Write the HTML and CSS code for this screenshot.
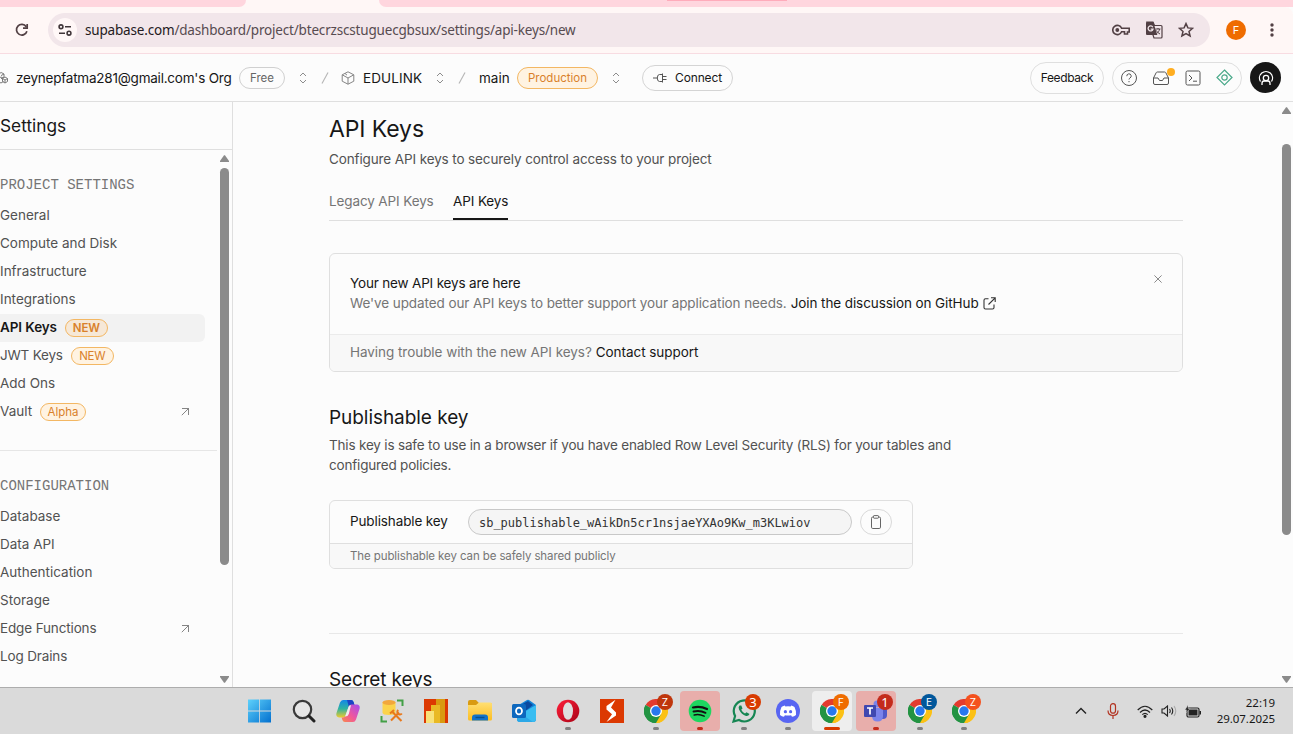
FILE: index.html
```html
<!DOCTYPE html>
<html lang="en">
<head>
<meta charset="utf-8">
<title>API Keys | Supabase</title>
<link rel="stylesheet" href="styles.css">
</head>
<body>
<svg class="defs" width="0" height="0">
  <defs>
    <linearGradient id="win" x1="0" y1="0" x2="1" y2="1"><stop offset="0" stop-color="#5ed1fb"/><stop offset="1" stop-color="#0370cf"/></linearGradient>
    <linearGradient id="copA" x1="0" y1="0" x2="0" y2="1"><stop offset="0" stop-color="#1387e8"/><stop offset=".5" stop-color="#2fb3a0"/><stop offset="1" stop-color="#efcb2d"/></linearGradient>
    <linearGradient id="copB" x1="1" y1="0" x2="0" y2="1"><stop offset="0" stop-color="#a34df0"/><stop offset=".55" stop-color="#f0569c"/><stop offset="1" stop-color="#f88b48"/></linearGradient>
    <linearGradient id="opera" x1="0" y1="0" x2="1" y2="1"><stop offset="0" stop-color="#ff1f3a"/><stop offset="1" stop-color="#a80316"/></linearGradient>
    <linearGradient id="folder" x1="0" y1="0" x2="0" y2="1"><stop offset="0" stop-color="#ffdf73"/><stop offset="1" stop-color="#fbbd22"/></linearGradient>
  </defs>
  <symbol id="updown" viewBox="0 0 8 12"><path d="M1 4l3-3 3 3M1 8l3 3 3-3" fill="none" stroke="#8c8c8c"/></symbol>
  <symbol id="slash" viewBox="0 0 8 12"><path d="M1 11.5L7 .5" fill="none" stroke="#b5b5b5" stroke-width="1.1"/></symbol>
  <symbol id="arrow" viewBox="0 0 9 9"><path d="M.8 8.2L8 1M1 1.500H7.500v6.500" fill="none" stroke="#858585"/></symbol>
  <symbol id="chrome" viewBox="0 0 24 24">
    <path d="M12 12L1.6 6A12 12 0 0 1 22.4 6z" fill="#e33b2e"/>
    <path d="M12 12L22.4 6A12 12 0 0 1 12 24z" fill="#fbc116"/>
    <path d="M12 12L12 24A12 12 0 0 1 1.6 6z" fill="#229342"/>
    <path d="M12 6h10.4A12 12 0 0 0 12 0z" fill="#e33b2e"/>
    <path d="M17.2 15L12 24a12 12 0 0 0 6-1.6L22.4 6H12z" fill="#fbc116"/>
    <path d="M1.6 6l5.2 9 5.2 3 5.2-3L12 24A12 12 0 0 1 1.6 6z" fill="#229342"/>
    <circle cx="12" cy="12" r="6" fill="#fff"/><circle cx="12" cy="12" r="4.7" fill="#2878ee"/>
  </symbol>
</svg>
<div class="screen">
  <div class="tabstrip"><div class="strip-left"></div><div class="strip-tab"></div><div class="strip-right"><i></i></div></div>
  <div class="toolbar">
    <svg class="reload" width="14" height="14" viewBox="0 0 14 14"><path d="M11.9 8.2A5.3 5.3 0 1 1 11.2 3.8M12.2 1v4.2H8" fill="none" stroke="#524044" stroke-width="1.7"/></svg>
    <div class="omnibox">
      <span class="site"><svg width="14" height="12" viewBox="0 0 14 12" fill="none" stroke="#40363a" stroke-width="1.6"><circle cx="3" cy="2.8" r="1.9"/><path d="M7 2.8h6M1 9.2h6"/><circle cx="11" cy="9.2" r="1.9"/></svg></span>
      <span class="url"><b>supabase.com</b>/dashboard/project/btecrzscstuguecgbsux/settings/api-keys/new</span>
      <span class="omni-icons">
        <svg width="18" height="12" viewBox="0 0 18 12" fill="none" stroke="#524044" stroke-width="1.6"><path d="M9.6 4.2H17.2V8H15.5V10H12.5V7.8H9.6A4.6 4.6 0 1 1 9.6 4.2z"/><circle cx="5.3" cy="6" r="1.9" fill="#524044" stroke="none"/></svg>
        <svg width="18" height="18" viewBox="0 0 18 18"><path d="M2 1h6l1.5 3.5H16a1 1 0 0 1 1 1V16a1 1 0 0 1-1 1H9l-1-3z" fill="none" stroke="#524044" stroke-width="1.2"/><path d="M2 1h6.3l4 13H2a1 1 0 0 1-1-1V2a1 1 0 0 1 1-1z" fill="#524044"/><path d="M7.8 6.2A2.5 2.5 0 1 0 8 8.2H5.7" fill="none" stroke="#f2e6ea" stroke-width="1.3"/><path d="M10.5 8h5M13 7v1M14.6 8c-.4 2-1.4 3.4-3 4.5M11.5 9.500c.6 1.500 1.800 2.500 3.500 3.500" fill="none" stroke="#524044"/></svg>
        <svg width="16" height="16" viewBox="0 0 16 16"><path d="M8 1.600l1.900 4.300 4.700.4-3.600 3.100 1.100 4.600L8 11.600 3.900 14 5 9.400 1.400 6.300l4.700-.4z" fill="none" stroke="#524044" stroke-width="1.500"/></svg>
      </span>
    </div>
    <span class="profile">F</span>
    <svg class="dots" width="4" height="14" viewBox="0 0 4 14" fill="#524044"><circle cx="2" cy="2" r="1.700"/><circle cx="2" cy="7" r="1.700"/><circle cx="2" cy="12" r="1.700"/></svg>
  </div>
  <header class="header">
    <svg class="org-ico" width="10" height="14" viewBox="0 0 10 14" fill="none" stroke="#7a7a7a"><path d="M0 2.200L1.200 1.500 4 3v3.200L1 7.800M1 4.600L4 3M5 6l2.500 1.500v3L5 12l-2.500-1.500v-3zM2.500 7.500L5 9l2.500-1.500M5 9v3M3 7L1 6 0 6.500M0 11.500l1 .5 2.500-1.500"/></svg>
    <span class="org">zeynepfatma281@gmail.com's Org</span>
    <span class="pill free">Free</span>
    <svg class="ud1" width="8" height="12"><use href="#updown"/></svg>
    <svg class="sl1" width="8" height="12"><use href="#slash"/></svg>
    <svg class="cube" width="14" height="14" viewBox="0 0 14 14" fill="none" stroke="#858585"><path d="M7 .8l5.800 3v6.400L7 13.200l-5.800-3V3.800zM1.200 3.800L7 7l5.800-3.200M7 7v6.200M4 2.500l2 1.600"/></svg>
    <span class="project">EDULINK</span>
    <svg class="ud2" width="8" height="12"><use href="#updown"/></svg>
    <svg class="sl2" width="8" height="12"><use href="#slash"/></svg>
    <span class="branch">main</span>
    <span class="pill prod">Production</span>
    <svg class="ud3" width="8" height="12"><use href="#updown"/></svg>
    <span class="connect"><svg width="14" height="10" viewBox="0 0 14 10" fill="none" stroke="#555"><path d="M0 5h4M9.500 1.500H6.500Q4.300 1.500 4.300 5T6.500 8.500H9.500M9.500.5v9M9.500 3.500H13.500M9.500 6.500H13.500"/></svg><span>Connect</span></span>
    <div class="header-right">
      <span class="feedback">Feedback</span>
      <span class="tools">
        <svg width="18" height="18" viewBox="0 0 18 18" fill="none" stroke="#555"><circle cx="9" cy="9" r="7.500"/><path d="M6.800 7.200A2.200 2.200 0 1 1 10 9q-1 .6-1 1.500M9 12v1.200"/></svg>
        <span class="inbox"><svg width="18" height="16" viewBox="0 0 18 16" fill="none" stroke="#555"><path d="M1.500 8L4.200 2.700Q4.600 2 5.300 2h7.400q.7 0 1.100.7L16.500 8v5q0 1.500-1.500 1.500H3Q1.500 14.500 1.500 13zM1.500 8H6l1.500 2.500h3L12 8h4.500"/></svg><i></i></span>
        <svg width="16" height="16" viewBox="0 0 16 16" fill="none" stroke="#555"><rect x="1" y="1" width="14" height="14" rx="1.500"/><path d="M4 5l3 3-3 3M8 11.200h4"/></svg>
        <svg width="17" height="17" viewBox="0 0 17 17" fill="none" stroke="#4aa98a" stroke-width="1.200"><path d="M8.500 1L16 8.500 8.500 16 1 8.500z"/><circle cx="8.500" cy="8.500" r="2.700"/></svg>
      </span>
      <span class="avatar"><svg width="16" height="18" viewBox="0 0 16 18" fill="none" stroke="#fff" stroke-width="1.300"><path d="M2.500 12.500A6.500 6.500 0 1 1 13.500 12.500M4 16v-1.500q0-2.500 2-2.500h4q2 0 2 2.500V16"/><circle cx="8" cy="9" r="2.700"/></svg></span>
    </div>
  </header>
  <div class="body">
    <aside class="sidebar">
      <div class="side-title">Settings</div>
      <div class="side-scroll">
        <nav class="nav">
          <div class="group">PROJECT SETTINGS</div>
          <a>General</a><a>Compute and Disk</a><a>Infrastructure</a><a>Integrations</a>
          <a class="active">API Keys<em>NEW</em></a><a class="jwt">JWT Keys<em>NEW</em></a><a>Add Ons</a>
          <a>Vault<em class="alpha">Alpha</em><svg width="9" height="9"><use href="#arrow"/></svg></a>
          <hr>
          <div class="group">CONFIGURATION</div>
          <a>Database</a><a>Data API</a><a>Authentication</a><a>Storage</a>
          <a class="edge">Edge Functions<svg width="9" height="9"><use href="#arrow"/></svg></a><a class="edge">Log Drains</a>
        </nav>
        <div class="bar side-bar">
          <svg width="9" height="7" viewBox="0 0 9 7"><path d="M4 .3h1L9 6v1H0V6z" fill="#8b8b8b"/></svg>
          <i></i>
          <svg width="9" height="7" viewBox="0 0 9 7"><path d="M0 0h9v1L5 6.700H4L0 1z" fill="#8b8b8b"/></svg>
        </div>
      </div>
    </aside>
    <main class="main">
      <div class="content">
        <h1>API Keys</h1>
        <p class="sub">Configure API keys to securely control access to your project</p>
        <div class="tabs"><span class="legacy">Legacy API Keys</span><span class="on">API Keys</span></div>
        <section class="alert">
          <div class="alert-top">
            <div><div class="strong">Your new API keys are here</div>
            <div class="alert-text"><span>We've updated our API keys to better support your application needs.</span><span class="link">Join the discussion on GitHub</span><svg width="13" height="13" viewBox="0 0 13 13" fill="none" stroke="#333" stroke-width="1.100"><path d="M5.500 1.800H2.500Q1 1.800 1 3.300V10.500Q1 12 2.500 12H9.500Q11 12 11 10.500V7.500M8 .8H12.200V5M12.200.8L5.500 7.500"/></svg></div></div>
            <svg class="close" width="8" height="8" viewBox="0 0 8 8"><path d="M.4.4l7.200 7.200M7.600.4L.4 7.600" stroke="#8a8a8a"/></svg>
          </div>
          <div class="alert-foot"><span>Having trouble with the new API keys?</span><span class="link">Contact support</span></div>
        </section>
        <h2>Publishable key</h2>
        <p class="desc"><span>This key is safe to use in a browser if you have enabled Row Level Security (RLS) for your tables and</span><br>configured policies.</p>
        <section class="card">
          <div class="key-row"><span class="key-label">Publishable key</span><span class="key">sb_publishable_wAikDn5cr1nsjaeYXAo9Kw_m3KLwiov</span><span class="copy"><svg width="12" height="14" viewBox="0 0 12 14" fill="none" stroke="#666"><rect x="1.500" y="2" width="9" height="11.500" rx="1.300"/><rect x="3.500" y=".6" width="5" height="2.600" rx=".6" fill="#fcfcfc"/></svg></span></div>
          <div class="card-foot">The publishable key can be safely shared publicly</div>
        </section>
        <hr>
        <h2 class="secret">Secret keys</h2>
      </div>
      <div class="bar main-bar">
        <svg width="9" height="7" viewBox="0 0 9 7"><path d="M4 .3h1L9 6v1H0V6z" fill="#8b8b8b"/></svg>
        <i></i>
        <svg width="9" height="7" viewBox="0 0 9 7"><path d="M0 0h9v1L5 6.700H4L0 1z" fill="#8b8b8b"/></svg>
      </div>
    </main>
  </div>
  <footer class="taskbar">
    <div class="apps">
      <span class="app"><svg width="24" height="24" viewBox="0 0 24 24"><path d="M0 .5h11.200v11H0zM12 .5h11v11H12zM0 12.500h11.200v11H0zM12 12.500h11v11H12z" fill="url(#win)"/></svg></span>
      <span class="app"><svg width="24" height="24" viewBox="0 0 24 24" fill="none"><circle cx="10.500" cy="10.500" r="8.700" stroke="#3a3a3a" stroke-width="2.200" fill="#e6e6e6"/><path d="M17 17l5 5" stroke="#222" stroke-width="3" stroke-linecap="round"/></svg></span>
      <span class="app"><svg width="24" height="24" viewBox="0 0 24 24"><path d="M7 1h8q2 0 2.600 2l1 3.500H15q-2 0-2.700 2L9.500 17q-.7 1.500-2.500 1.500H3Q-.5 18 .5 14L4 3.500Q5 1 7 1z" fill="url(#copA)"/><path d="M11 1h4q2 0 2.600 2l1 3.500H15q-1.500 0-2.200 1z" fill="#1d43c5"/><path d="M17 23H9q-2 0-2.600-2l-.8-2.500H7q2 0 2.800-2L13 7q.6-1.500 2.500-1.500H21q3.500.5 2.500 4.500L20 20.500Q19 23 17 23z" fill="url(#copB)"/><path d="M9.800 15.500L12.700 7.500Q13.400 6 15 6.200L12.800 15q-.8 2.500-3.800 2.500z" fill="#eee"/></svg></span>
      <span class="app"><svg width="24" height="24" viewBox="0 0 24 24"><path d="M17 1.500h5.500V7M1.500 17v5.500H7" fill="none" stroke="#43a047" stroke-width="2"/><path d="M2.500 3.500v10q0 2.500 6.500 2.500t6.500-2.500v-10z" fill="#fcd34b"/><ellipse cx="9" cy="3.500" rx="6.500" ry="2.500" fill="#f2a73c"/><path d="M11 21.500l8-8M12.500 13l9 9" stroke="#e8791d" stroke-width="2.100"/><path d="M10 14.500l4-3.500M18.300 11a2.500 2.500 0 1 0 3.500 3.500" stroke="#e8791d" stroke-width="2" fill="none"/></svg></span>
      <span class="app"><svg width="24" height="24" viewBox="0 0 24 24"><path d="M0 0h24v24H0z" fill="#dc3902"/><path d="M12 0h9v24h-9z" fill="#d99a10"/><path d="M7 6h9v18H7z" fill="#e9b924"/><path d="M2 12h8v12H2z" fill="#f8e27a"/></svg></span>
      <span class="app"><svg width="24" height="24" viewBox="0 0 24 24"><path d="M0 3q0-2 2-2h6l3 3h11q2 0 2 2v6H0z" fill="#d99b12"/><path d="M0 6h8l3-2.500h11.500Q24 3.500 24 5v15q0 1.500-1.500 1.500h-21Q0 21.500 0 20z" fill="url(#folder)"/><path d="M4 21.500V18.500q0-3 3-3h10q3 0 3 3v3z" fill="#1173c9"/><path d="M7.500 18.500h9" stroke="#07508f" stroke-width="1.400"/></svg></span>
      <span class="app"><svg width="24" height="24" viewBox="0 0 24 24"><path d="M5 7l10-6q1-.5 2 0l7 5v14q0 3-3 3H8q-3 0-3-3z" fill="#1283d8"/><path d="M7 7l9-5 5 4-9 7z" fill="#0a4aa0"/><path d="M12 13L24 6v14q0 3-3 3H8q-2 0-3-2z" fill="#39bdf1"/><path d="M5 12l16 11H8q-3 0-3-3z" fill="#2ca8e7"/><rect y="5" width="14" height="14" rx="1.500" fill="#0d68be"/><ellipse cx="7" cy="12" rx="3" ry="3.400" fill="none" stroke="#fff" stroke-width="1.800"/></svg></span>
      <span class="app"><svg width="24" height="24" viewBox="0 0 24 24"><circle cx="12" cy="12" r="11.300" fill="url(#opera)"/><ellipse cx="12" cy="12" rx="5" ry="8.800" fill="#dedede"/></svg><b></b></span>
      <span class="app"><svg width="24" height="24" viewBox="0 0 24 24"><path d="M0 0h24v24H0z" fill="#dc3902"/><path d="M15.500 .8L6.500 7v3.500l5.500 4.800L6.500 23 16 16.500v-3L11 8.500z" fill="#fff"/></svg></span>
      <span class="app"><svg width="24" height="24"><use href="#chrome"/></svg><em class="brick">Z</em><b></b></span>
      <span class="app pink"><svg width="24" height="24" viewBox="0 0 24 24" fill="none" stroke="#111" stroke-linecap="round"><circle cx="12" cy="12" r="11.300" fill="#1ed760" stroke="none"/><path d="M5 8.500q7-2 14 1.500" stroke-width="2.200"/><path d="M5.500 12.500q6.500-1.500 12 1.300" stroke-width="1.900"/><path d="M6.200 16q5-1.300 10 1.200" stroke-width="1.500"/></svg><b></b></span>
      <span class="app"><svg width="24" height="24" viewBox="0 0 24 24" fill="none"><path d="M1.500 22.500l1.600-5.500A10.500 10.500 0 1 1 7 21z" stroke="#168653" stroke-width="2.200"/><path d="M7.500 6.500Q6 8 7 10.500q2.500 5 7 6.500 2.500.5 3.500-2l-3-1.800-1.500 1.300q-2.500-1-3.800-3.700L10.500 9.500 9.300 6.500z" fill="#168653"/></svg><em class="num">3</em><b></b></span>
      <span class="app"><svg width="24" height="24" viewBox="0 0 24 24"><circle cx="12" cy="12" r="12" fill="#5865f2"/><path d="M8.800 6.500Q6.500 7 5.500 8 3.500 12 4 16q1.800 1.500 4 1.700l.9-1.500q3 .8 6.200 0l.9 1.500q2.200-.2 4-1.700.5-4-1.500-8-1-1-3.300-1.500l-.6 1Q12 7 9.400 7.500z" fill="#fff"/><circle cx="9.400" cy="12.700" r="1.600" fill="#5865f2"/><circle cx="14.600" cy="12.700" r="1.600" fill="#5865f2"/></svg><b></b></span>
      <span class="app current"><svg width="24" height="24"><use href="#chrome"/></svg><em class="orange">F</em><b></b></span>
      <span class="app pink"><svg width="24" height="24" viewBox="0 0 24 24"><circle cx="13" cy="5" r="3.500" fill="#7b83eb"/><path d="M16 8h7v8q0 4-4 4h-4z" fill="#5059c9"/><path d="M8 9h11v8q0 5.500-5.500 5.500T8 17z" fill="#7b83eb"/><rect y="6" width="12" height="12" rx="1" fill="#4048b0"/><path d="M3 9h6M6 9v6.500" stroke="#fff" stroke-width="1.700"/></svg><em class="num red">1</em><b></b></span>
      <span class="app"><svg width="24" height="24"><use href="#chrome"/></svg><em class="blue">E</em><b></b></span>
      <span class="app"><svg width="24" height="24"><use href="#chrome"/></svg><em class="coral">Z</em><b></b></span>
    </div>
    <div class="tray">
      <svg class="chev" width="12" height="8" viewBox="0 0 12 8"><path d="M1 6.500l5-5 5 5" fill="none" stroke="#222" stroke-width="1.400"/></svg>
      <svg class="mic" width="12" height="16" viewBox="0 0 12 16" fill="none" stroke="#b23220" stroke-width="1.200"><rect x="3.500" y=".7" width="5" height="9.500" rx="2.500"/><path d="M1 7.500q0 5 5 5t5-5M6 12.500V16"/></svg>
      <svg class="wifi" width="16" height="13" viewBox="0 0 16 13" fill="none" stroke="#222" stroke-width="1.200"><path d="M.7 5q7.300-7.500 14.600 0M3 7.500q5-5 10 0M5.300 9.700q2.700-2.700 5.400 0"/><circle cx="8" cy="11.300" r="1" fill="#222"/></svg>
      <svg class="vol" width="16" height="12" viewBox="0 0 16 12" fill="none" stroke="#222" stroke-width="1.100"><path d="M1 4h2L6.500 1v10L3 8H1zM8.500 4q1.500 2 0 4M10.500 2.500q2.500 3.500 0 7"/><path d="M13 1q3.500 5 0 10" stroke="#aaa"/></svg>
      <svg class="batt" width="17" height="13" viewBox="0 0 17 13"><rect x="2" y="3" width="12" height="9" rx="1.500" fill="none" stroke="#222" stroke-width="1.200"/><path d="M3.500 4.500h9v6h-9zM14.500 6H16v3.500h-1.500z" fill="#222"/><path d="M3 0L0 5h2L1 8l4-4.500H3z" fill="#222" stroke="#dadada" stroke-width=".4"/></svg>
      <div class="clock"><span>22:19</span><span>29.07.2025</span></div>
    </div>
  </footer>
</div>
</body>
</html>
```
FILE: styles.css
```css
* { box-sizing: border-box; }
body { margin: 0; font-family: Inter, "Liberation Sans", sans-serif; font-size: 13.5px; color: #171717; background: #fcfcfc; }
svg { display: block; flex: none; }
.defs { position: absolute; }
h1, h2, p { margin: 0; font-weight: 400; }
.screen { width: 1293px; height: 734px; display: flex; flex-direction: column; overflow: hidden; }
.screen span { white-space: nowrap; }

.tabstrip { height: 7px; display: flex; background: #fff7f6; flex: none; }
.strip-left { width: 246px; background: #ffd6de; border-bottom-right-radius: 8px; }
.strip-tab { width: 133px; }
.strip-right { flex: 1; background: #ffd6de; border-bottom-left-radius: 8px; padding-left: 288px; }
.strip-right i { display: block; width: 120px; height: 1px; background: #ffacbb; }
.toolbar { height: 47px; flex: none; display: flex; align-items: center; background: #fff7f6; border-bottom: 1px solid #f8dce2; border-top-right-radius: 8px; padding-left: 15px; }
.omnibox { margin-left: 19px; width: 1162px; height: 34px; border-radius: 17px; background: #f2e6ea; display: flex; align-items: center; padding-left: 5px; }
.site { width: 24px; height: 24px; border-radius: 50%; background: #fff7f7; display: flex; align-items: center; justify-content: center; }
.url { margin-left: 8px; font: 13.5px/20px "Noto Sans", sans-serif; letter-spacing: -.18px; color: #574b50; }
.url b { font-weight: 400; color: #241a1d; }
.omni-icons { margin-left: auto; margin-right: 16px; display: flex; align-items: center; gap: 15px; }
.profile { margin-left: 16px; width: 20px; height: 20px; border-radius: 50%; background: #ef6c00; color: #fff; font-size: 11px; line-height: 20px; text-align: center; }
.dots { margin-left: 24px; }

.header { height: 48px; flex: none; display: flex; align-items: center; border-bottom: 1px solid #dfdfdf; }
.org-ico { margin-right: 6px; }
.org { width: 215px; letter-spacing: -.22px; }
.pill { height: 22px; border-radius: 11px; border: 1px solid #d0d0d0; font-size: 11.5px; line-height: 20px; text-align: center; color: #666; }
.free { width: 46px; margin-left: 8px; }
.ud1 { margin-left: 14px; } .sl1 { margin-left: 14px; } .cube { margin-left: 12px; }
.project { margin-left: 8px; width: 60px; letter-spacing: .1px; }
.ud2 { margin-left: 13px; } .sl2 { margin-left: 14px; }
.branch { margin-left: 13px; width: 30px; }
.prod { margin-left: 8px; width: 81px; border-color: #f3b763; background: #fff3e2; color: #d9812b; }
.ud3 { margin-left: 14px; }
.connect { margin-left: 22px; width: 91px; height: 26px; border: 1px solid #d4d4d4; border-radius: 13px; display: flex; align-items: center; padding-left: 10px; gap: 8px; font-size: 12px; letter-spacing: -.14px; }
.header-right { margin-left: auto; padding-right: 12px; display: flex; align-items: center; gap: 8px; }
.feedback { width: 74px; height: 32px; border: 1px solid #dfdfdf; border-radius: 16px; line-height: 30px; text-align: center; font-size: 12px; letter-spacing: -.4px; }
.tools { width: 130px; height: 32px; border: 1px solid #dfdfdf; border-radius: 16px; display: flex; align-items: center; justify-content: space-between; padding: 0 8px 0 7px; }
.inbox { position: relative; left: -1px; }
.inbox i { position: absolute; right: -5px; top: -2px; width: 8px; height: 8px; border-radius: 50%; background: #ffae21; }
.avatar { width: 31px; height: 31px; border-radius: 50%; background: #171717; display: flex; align-items: center; justify-content: center; }

.body { height: 585px; flex: none; display: flex; overflow: hidden; }
.sidebar { width: 233px; border-right: 1px solid #dfdfdf; flex: none; }
.side-title { height: 48px; border-bottom: 1px solid #dfdfdf; font-size: 17.300px; line-height: 48px; }
.side-scroll { display: flex; height: 537px; }
.nav { width: 220px; padding-top: 25px; }
.group { font: 14px/20px "Liberation Mono", monospace; color: #757575; margin-bottom: 7px; }
.nav a { display: flex; align-items: center; width: 205px; height: 28px; color: #525252; padding: 0 15px 2px 0; }
.nav a svg { margin: 1px 0 0 auto; }
.nav .active { background: #f2f2f2; border-radius: 0 6px 6px 0; color: #171717; font-weight: 600; letter-spacing: -.1px; }
.nav .jwt { letter-spacing: -.2px; }
.nav .edge { letter-spacing: -.14px; }
.nav em { font-style: normal; width: 43px; height: 18px; border-radius: 9px; border: 1px solid #f3b763; background: #fff3e2; color: #d9812b; font-size: 11.500px; line-height: 16px; text-align: center; margin: 2px 0 0 8px; }
.nav .active em { background: #f6e8d7; }
.nav .alpha { width: 46px; }
.nav hr { margin: 24px 3px 25px 0; border: 0; height: 1px; background: #e6e6e6; }
.bar { display: flex; flex-direction: column; width: 9px; align-items: center; }
.bar i { width: 9px; border-radius: 4.500px; background: #8b8b8b; }
.side-bar { padding-top: 5px; }
.side-bar i { height: 397px; margin: 6px 0 111px; }

.main { flex: 1; display: flex; justify-content: space-between; }
.content { width: 854px; margin-left: 96px; padding-top: 11px; }
h1 { font-size: 23px; line-height: 32px; letter-spacing: -.1px; }
.sub { line-height: 20px; margin-top: 4px; color: #525252; letter-spacing: -.12px; }
.tabs { display: flex; gap: 20px; height: 30px; margin-top: 22px; line-height: 20px; border-bottom: 1px solid #dfdfdf; color: #757575; letter-spacing: -.12px; }
.legacy { width: 104px; }
.tabs .on { width: 55px; color: #171717; border-bottom: 2px solid #171717; }
.alert { margin-top: 32px; height: 119px; border: 1px solid #dfdfdf; border-radius: 6px; overflow: hidden; }
.alert-top { height: 80px; padding: 19px 20px 0; line-height: 20px; display: flex; justify-content: space-between; }
.strong { letter-spacing: -.17px; }
.alert-text { display: flex; align-items: center; color: #757575; letter-spacing: -.09px; }
.link { color: #171717; margin-left: 4px; }
.alert-text svg { margin-left: 4px; }
.close { margin-top: 2px; }
.alert-foot { height: 37px; border-top: 1px solid #ebebeb; background: #f8f8f8; padding-left: 20px; line-height: 35px; color: #757575; letter-spacing: -.05px; }
h2 { font-size: 19px; line-height: 28px; margin-top: 32px; letter-spacing: -.05px; }
.secret { letter-spacing: -.15px; }
.desc { line-height: 20px; margin-top: 3px; color: #525252; letter-spacing: -.18px; }
.card { margin-top: 25px; width: 584px; height: 69px; border: 1px solid #dfdfdf; border-radius: 6px; overflow: hidden; }
.key-row { height: 42px; display: flex; align-items: center; padding-left: 20px; }
.key-label { width: 118px; letter-spacing: -.12px; padding-bottom: 2px; }
.key { width: 384px; height: 26px; border: 1px solid #c8c8c8; border-radius: 13px; background: #f5f5f5; padding-left: 10px; font: 12px/26px "DejaVu Sans Mono", monospace; letter-spacing: -.02px; color: #333; }
.copy { margin-left: 8px; width: 32px; height: 26px; border: 1px solid #d9d9d9; border-radius: 13px; display: flex; align-items: center; justify-content: center; }
.card-foot { height: 25px; border-top: 1px solid #dfdfdf; background: #f8f8f8; padding-left: 20px; font-size: 11.500px; line-height: 24px; color: #757575; letter-spacing: -.1px; }
.content hr { margin: 64px 0 0; border: 0; height: 1px; background: #e8e8e8; }
.main-bar { padding-top: 5px; margin-right: 2px; }
.main-bar i { height: 391px; margin: 30px 0 141px; }

.taskbar { height: 47px; flex: none; border-top: 1px solid #adadad; background: #dadada; display: flex; justify-content: space-between; padding-left: 240px; }
.apps { display: flex; gap: 4px; padding-top: 3px; }
.app { position: relative; width: 40px; height: 40px; border-radius: 4px; display: flex; align-items: center; justify-content: center; }
.app b { position: absolute; left: 17px; top: 36px; width: 6px; height: 3px; border-radius: 2px; background: #808080; }
.app em { position: absolute; left: 21px; top: 3px; width: 16px; height: 16px; border-radius: 50%; font: 10px/16px Inter, sans-serif; color: #fff; text-align: center; }
.app .num { font: 13px/16px "Noto Sans", sans-serif; background: #d83b01; }
.app .red { background: #c42b1c; }
.brick { background: #bf360c; } .orange { background: #ef6c00; } .blue { background: #01579b; } .coral { background: #f4511e; }
.pink { background: #e8aeab; } .pink b { background: #c42b1c; }
.current { background: #eee; }
.current b { left: 12px; width: 16px; background: #d83b01; }
.tray { display: flex; align-items: center; padding-right: 18px; }
.mic { margin-left: 20px; } .wifi { margin-left: 18px; } .vol { margin-left: 8px; } .batt { margin-left: 8px; }
.clock { width: 64px; margin-left: 9px; display: flex; flex-direction: column; align-items: flex-end; font: 11.500px/16px "Noto Sans", sans-serif; letter-spacing: -.05px; }
```
